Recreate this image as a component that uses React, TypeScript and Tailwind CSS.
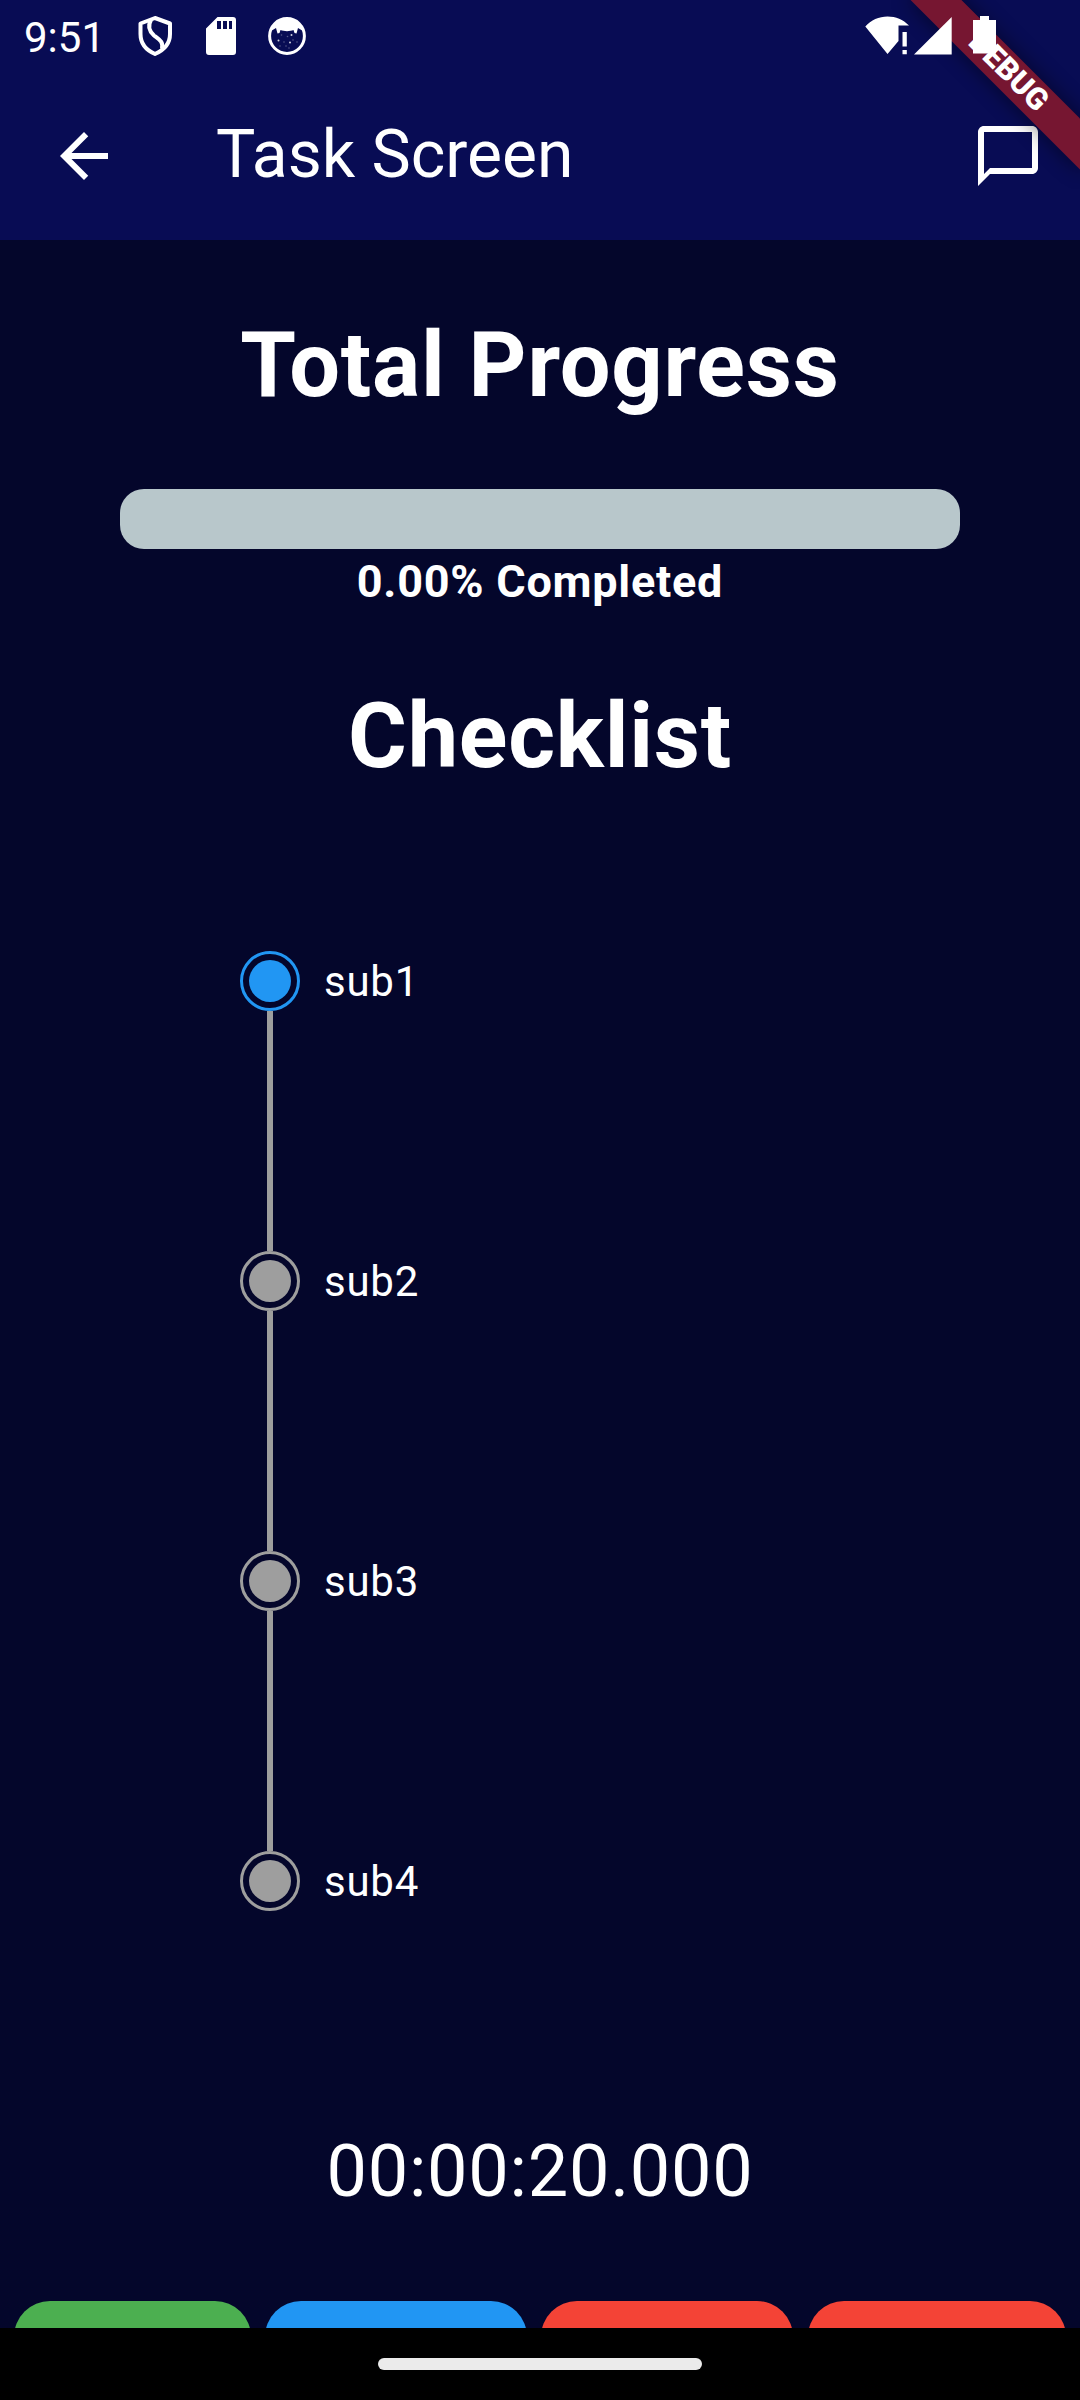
import React from "react";

const steps = [
  { label: "sub1", active: true },
  { label: "sub2", active: false },
  { label: "sub3", active: false },
  { label: "sub4", active: false },
];

function ShieldIcon() {
  return (
    <svg className="ml-[39px] h-[44px] w-[36px] shrink-0" viewBox="137 14 36 44" fill="none" stroke="#fff" strokeWidth="4" strokeLinejoin="round">
      <path d="M155 18 170 23.500V34C170 44 163 50.500 155 54 147 50.500 140.500 44 140.500 34V23.500Z" />
      <path d="M151 20C147.500 26 149 31 154 35.500 160 40 163.500 42 162 49" />
    </svg>
  );
}

function SdCardIcon() {
  return (
    <svg className="ml-[33px] h-[44px] w-[30px] shrink-0" viewBox="206 14 30 44">
      <path fill="#fff" fillRule="evenodd" d="M217.500 17H233a3 3 0 0 1 3 3V52a3 3 0 0 1-3 3H209a3 3 0 0 1-3-3V28.500ZM217 21V29H221V21ZM223 21V29H227V21ZM229 21V29H232V21Z" />
    </svg>
  );
}

function FaceIcon() {
  return (
    <svg className="ml-[31px] h-[44px] w-[40px] shrink-0" viewBox="267 14 40 44">
      <circle cx="287" cy="36" r="17.400" fill="none" stroke="#fff" strokeWidth="3" />
      <path fill="#fff" d="M271 31C272 23 279 18 287 18S302 23 303 31L298 28 296.500 33.500 294.500 33 293.500 30C290 31.500 284 31.500 280.500 30L279.500 33 277.500 33.500 276 28Z" />
      <g fill="#fff" opacity="0.8">
        <circle cx="278.500" cy="40.500" r="1" />
        <circle cx="290" cy="42.500" r="1" />
        <circle cx="291.500" cy="35" r="1" />
      </g>
      <g fill="#fff" opacity="0.3">
        <circle cx="281.500" cy="35" r="0.800" />
        <circle cx="287.500" cy="36.500" r="0.800" />
        <circle cx="284" cy="42" r="0.800" />
        <circle cx="280" cy="46" r="0.800" />
        <circle cx="286" cy="46" r="0.800" />
        <circle cx="289" cy="48" r="0.800" />
        <circle cx="293" cy="40" r="0.800" />
        <circle cx="297" cy="42" r="0.800" />
      </g>
    </svg>
  );
}

function SystemIcons() {
  return (
    <svg className="mr-[82px] ml-auto h-[44px] w-[134px] shrink-0" viewBox="864 14 134 44" fill="#fff">
      <path d="M865.300 26.500C871 20 879 16.500 887.500 16.500S903 19.500 909 25.600H898.500V41L887.500 54Z" />
      <path d="M902.500 32H906.800V46.500H902.500ZM902.500 50H906.800V54.300H902.500Z" />
      <path d="M951.700 17V54.500H914Z" />
      <path d="M980 16H989V20H996V53.500H973V20H980Z" />
    </svg>
  );
}

function DebugBanner() {
  return (
    <div className="pointer-events-none absolute top-0 right-0 h-[240px] w-[240px] overflow-hidden">
      <div className="absolute top-[54px] left-[48px] flex h-[36px] w-[240px] rotate-45 items-center justify-center bg-[#b71c1c]/63 pb-[2px] text-[30.6px] leading-none font-black text-white">
        <span>DEBUG</span>
      </div>
    </div>
  );
}

function BannerShadow() {
  return (
    <svg className="pointer-events-none absolute top-0 right-0 h-[240px] w-[240px]" viewBox="0 0 240 240">
      <defs>
        <filter id="soft" x="-50%" y="-200%" width="200%" height="500%">
          <feGaussianBlur stdDeviation="10.900" />
        </filter>
        <mask id="outside">
          <rect width="240" height="240" fill="#fff" />
          <rect x="-120" y="84" width="240" height="36" fill="#000" transform="translate(240 0) rotate(45)" />
        </mask>
      </defs>
      <g mask="url(#outside)">
        <g transform="translate(240 0) rotate(45)">
          <rect x="-120" y="84" width="240" height="36" fill="#000" opacity="0.5" filter="url(#soft)" />
        </g>
      </g>
    </svg>
  );
}

export default function App() {
  return (
    <div className="relative flex h-[2400px] w-[1080px] flex-col overflow-hidden bg-[#04062b] font-['Roboto',sans-serif] text-white">
      <header className="flex h-[240px] shrink-0 flex-col bg-[#080c54]">
        <div className="relative z-20 flex h-[72px] items-center pl-[24px]">
          <span className="w-[74px] pt-[4px] text-[42px] leading-[68px] whitespace-nowrap">9:51</span>
          <ShieldIcon />
          <SdCardIcon />
          <FaceIcon />
          <SystemIcons />
        </div>
        <div className="flex h-[168px] items-center pr-[36px] pl-[48px]">
          <svg className="size-[72px]" viewBox="0 0 24 24" fill="#fff">
            <path d="M20 11H7.830l5.590-5.590L12 4l-8 8 8 8 1.410-1.410L7.830 13H20v-2z" />
          </svg>
          <h1 className="mb-[2px] ml-[96px] text-[66px] leading-[78px] whitespace-nowrap">Task Screen</h1>
          <svg className="ml-auto size-[72px]" viewBox="0 0 24 24" fill="#fff">
            <path d="M20 2H4c-1.100 0-2 .9-2 2v18l4-4h14c1.100 0 2-.9 2-2V4c0-1.100-.9-2-2-2zm0 14H6l-2 2V4h16v12z" />
          </svg>
        </div>
      </header>
      <BannerShadow />
      <DebugBanner />

      <main className="flex h-[2088px] shrink-0 flex-col items-center overflow-hidden tracking-[0.75px]">
        <h2 className="mt-[73px] text-[90px] leading-[106px] font-bold whitespace-nowrap">Total Progress</h2>
        <div className="mt-[70px] h-[60px] w-[840px] shrink-0 rounded-[24px] bg-[#b8c7cb]" />
        <p className="mt-[6px] text-[45px] leading-[53px] font-bold whitespace-nowrap">0.00% Completed</p>
        <h2 className="mt-[76px] text-[90px] leading-[106px] font-bold whitespace-nowrap">Checklist</h2>

        <ol className="mt-[161px] flex w-full flex-col pl-[240px]">
          {steps.map((step, i) => (
            <li key={step.label} className="flex flex-col">
              <div className="flex h-[60px] items-center">
                <div className={`flex size-[60px] items-center justify-center rounded-full border-[3px] ${step.active ? "border-[#2196f3]" : "border-[#9e9e9e]"}`}>
                  <div className={`size-[42px] rounded-full ${step.active ? "bg-[#2196f3]" : "bg-[#9e9e9e]"}`} />
                </div>
                <span className="ml-[24px] pt-[2px] text-[42px] leading-[58px] whitespace-nowrap">{step.label}</span>
              </div>
              {i < steps.length - 1 && <div className="ml-[27px] h-[240px] w-[6px] bg-[#9e9e9e]" />}
            </li>
          ))}
        </ol>

        <p className="mt-[219px] text-[72px] leading-[84px] whitespace-nowrap">00:00:20.000</p>
        <div className="mt-[87px] flex w-full shrink-0 justify-evenly">
          <div className="h-[120px] w-[236.700px] rounded-[36px] bg-[#4caf50]" />
          <div className="h-[120px] w-[261.200px] rounded-[36px] bg-[#2196f3]" />
          <div className="h-[120px] w-[252.300px] rounded-[36px] bg-[#f44336]" />
          <div className="h-[120px] w-[258px] rounded-[36px] bg-[#f44336]" />
        </div>
      </main>

      <footer className="flex flex-1 items-start justify-center bg-black pt-[30px]">
        <div className="h-[12px] w-[324px] rounded-full bg-[#ebebeb]" />
      </footer>
    </div>
  );
}
